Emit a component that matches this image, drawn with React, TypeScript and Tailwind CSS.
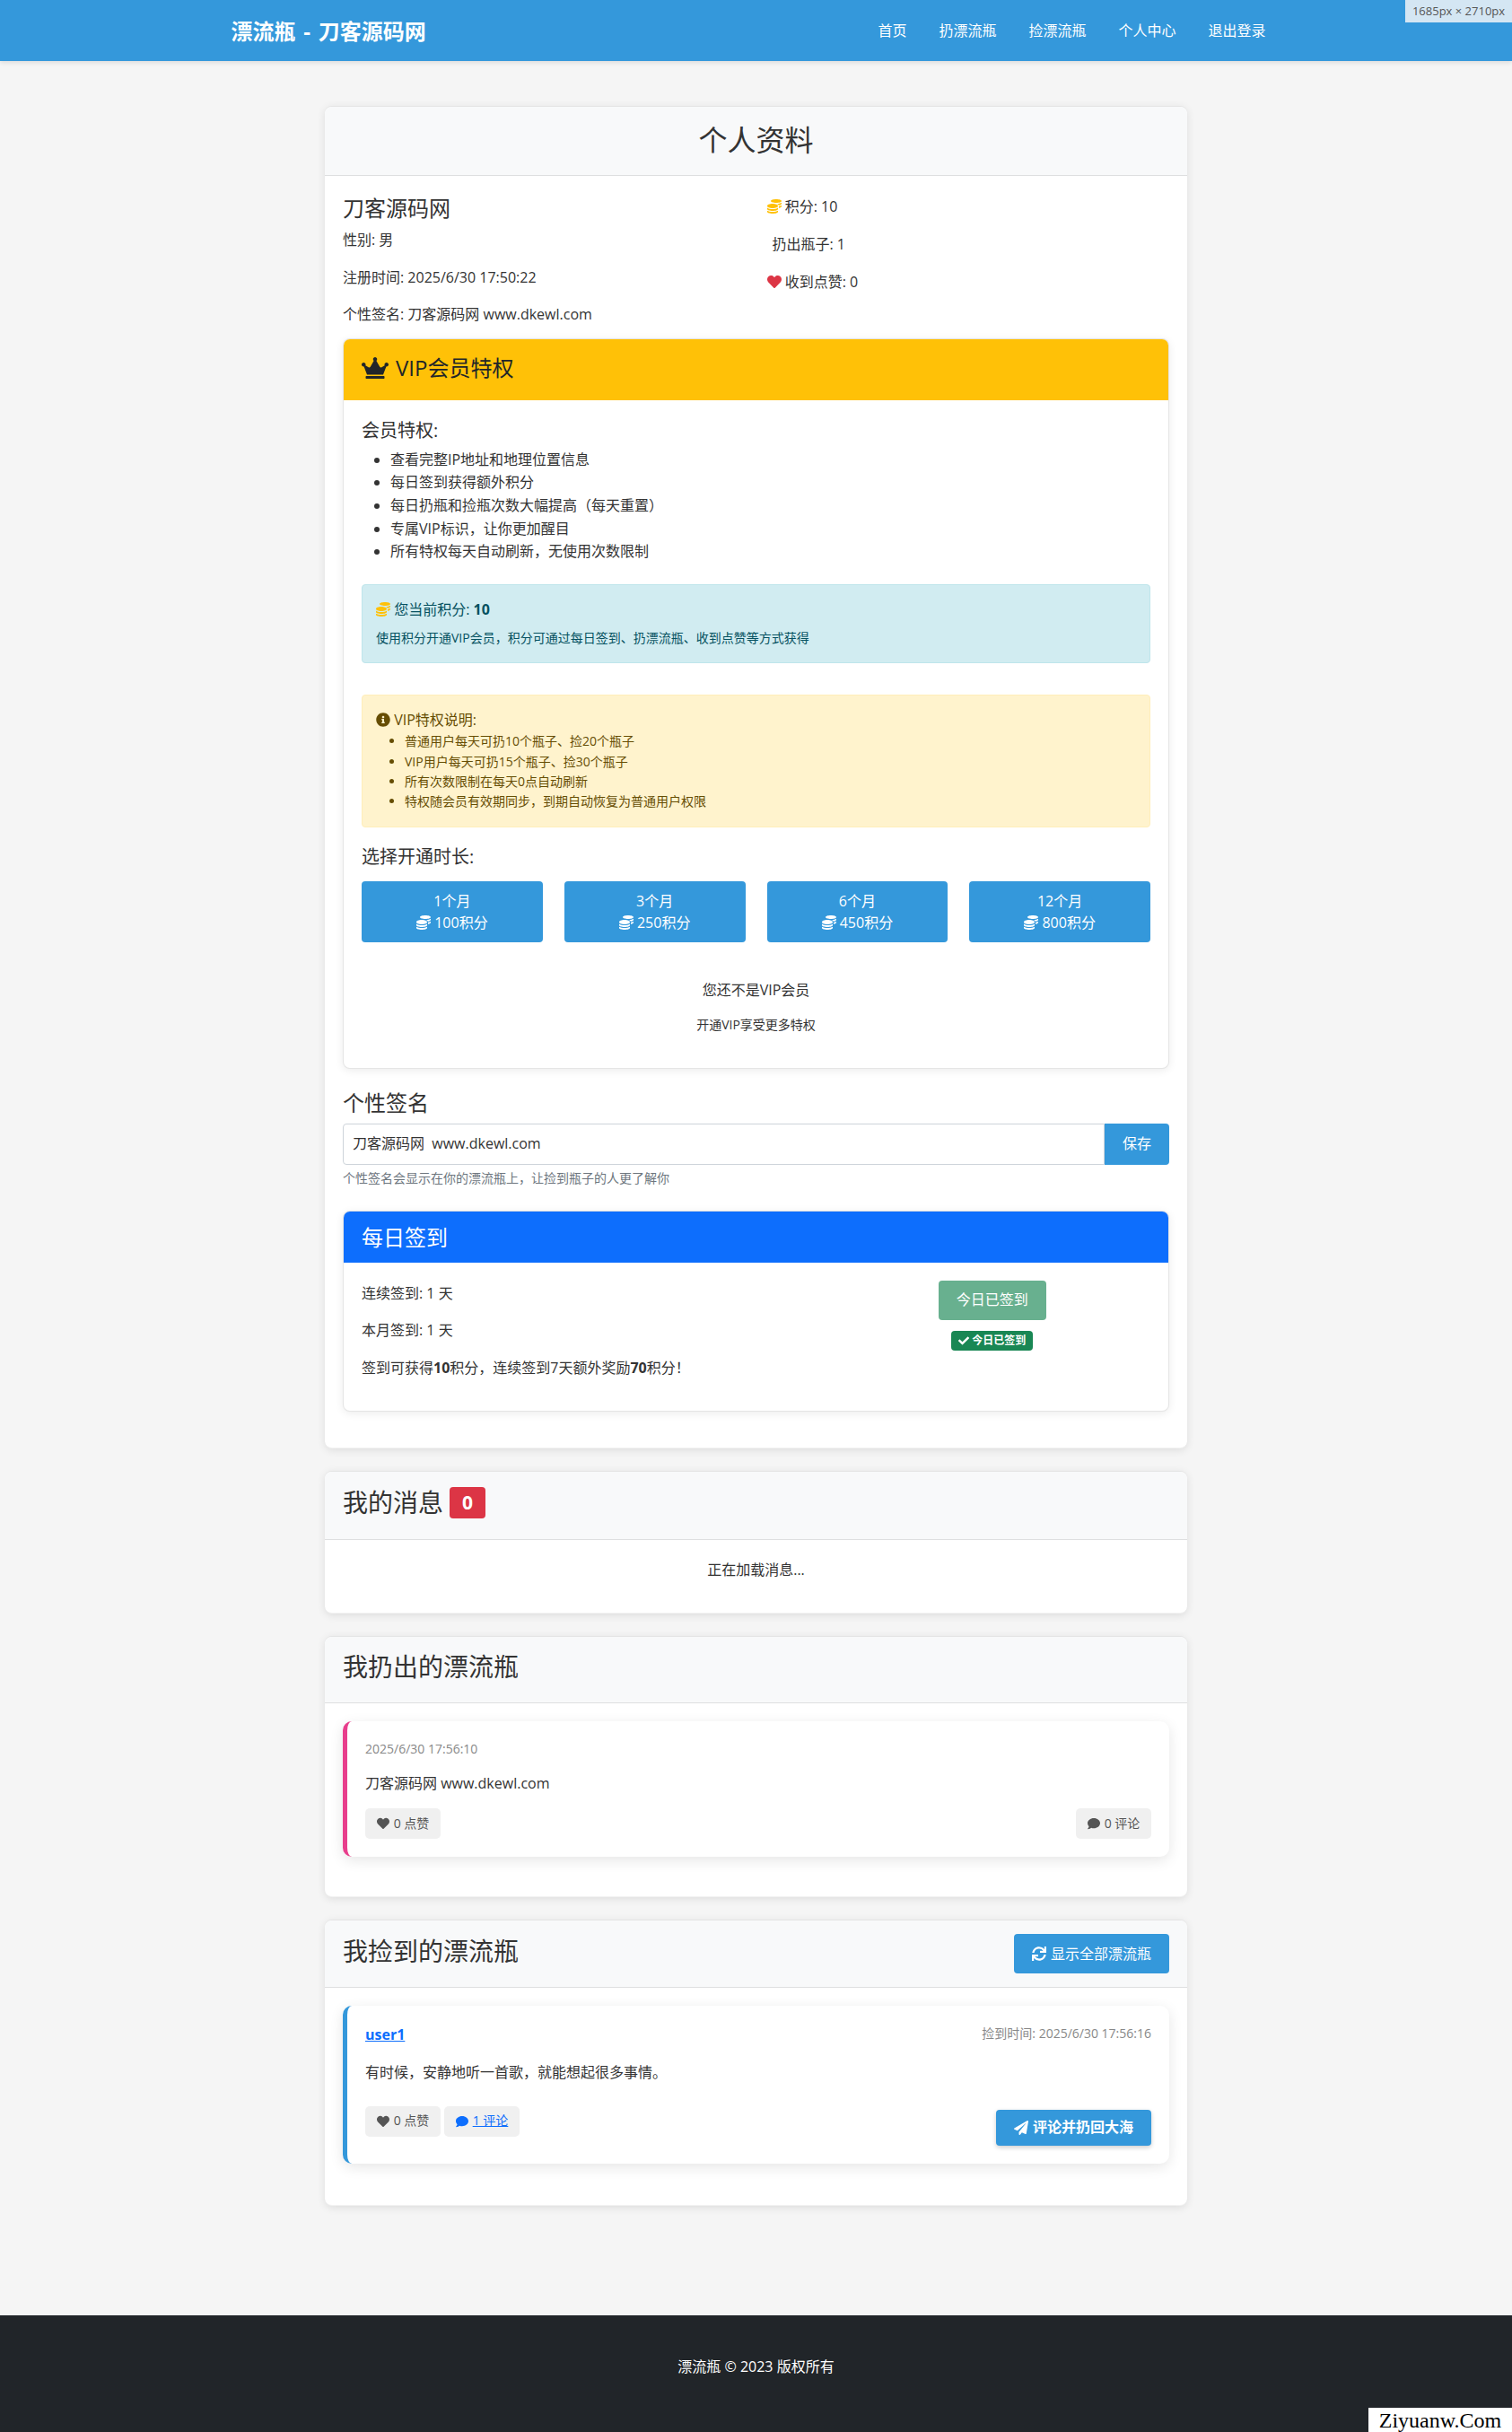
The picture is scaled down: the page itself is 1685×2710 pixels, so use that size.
import { FaCheck, FaCoins, FaComment, FaCrown, FaHeart, FaInfoCircle, FaPaperPlane, FaSync } from 'react-icons/fa';

const navLinks = ['首页', '扔漂流瓶', '捡漂流瓶', '个人中心', '退出登录'];
const perks = [
  '查看完整IP地址和地理位置信息',
  '每日签到获得额外积分',
  '每日扔瓶和捡瓶次数大幅提高（每天重置）',
  '专属VIP标识，让你更加醒目',
  '所有特权每天自动刷新，无使用次数限制',
];
const vipNotes = [
  '普通用户每天可扔10个瓶子、捡20个瓶子',
  'VIP用户每天可扔15个瓶子、捡30个瓶子',
  '所有次数限制在每天0点自动刷新',
  '特权随会员有效期同步，到期自动恢复为普通用户权限',
];
const plans = [
  { label: '1个月', cost: 100 },
  { label: '3个月', cost: 250 },
  { label: '6个月', cost: 450 },
  { label: '12个月', cost: 800 },
];

const icon = 'inline align-[-0.125em]';
const cardShell =
  'mb-[25px] rounded-lg border-y border-b-black/5 border-t-black/10 bg-white shadow-[0_2px_10px_rgba(0,0,0,0.1)] overflow-hidden';
const cardHead = 'border-b border-black/10 bg-[#f8f9fa]';
const subCard =
  'rounded-lg border border-black/10 bg-white shadow-[0_2px_10px_rgba(0,0,0,0.08)] overflow-hidden';
const pill = 'flex h-[34px] w-[84px] items-center justify-center gap-[5px] rounded-[5px] bg-[#f0f0f0] text-sm leading-[1.6]';

export default function App() {
  return (
    <div className="relative flex min-h-[2710px] flex-col bg-[#f5f5f5] font-['Open_Sans','Noto_Sans_CJK_SC',sans-serif] text-base leading-[1.6] text-[#333]">
      {/* Navbar */}
      <nav className="mb-[50px] h-[68px] bg-[#3498db] pt-[2px] text-white shadow-[0_2px_5px_rgba(0,0,0,0.1)]">
        <div className="mx-auto flex h-full w-[1170px] items-center justify-between">
          <a className="text-2xl font-bold [word-spacing:2.5px]">漂流瓶 - 刀客源码网</a>
          <ul className="flex gap-[36px] pr-[17px]">
            {navLinks.map((link) => (
              <li key={link}>{link}</li>
            ))}
          </ul>
        </div>
      </nav>

      <main className="mx-auto w-[961px]">
        {/* Profile */}
        <section className={cardShell}>
          <div className={`${cardHead} px-5 pt-[18px] pb-5 text-center`}>
            <h2 className="text-[32px] leading-[1.2]">个人资料</h2>
          </div>
          <div className="px-5 pt-[22px]">
            <div className="grid grid-cols-2 gap-x-6">
              <div>
                <h3 className="mb-2 text-2xl leading-[1.2]">刀客源码网</h3>
                <p className="mb-4">性别: 男</p>
                <p className="mb-4">注册时间: 2025/6/30 17:50:22</p>
                <p className="mb-[13px]">个性签名: 刀客源码网 www.dkewl.com</p>
              </div>
              <div>
                <p className="mb-4">
                  <FaCoins className={`${icon} text-[#ffc107]`} /> 积分: 10
                </p>
                <p className="mb-4 ml-[6px]">扔出瓶子: 1</p>
                <p className="mb-4">
                  <FaHeart className={`${icon} text-[#dc3545]`} /> 收到点赞: 0
                </p>
              </div>
            </div>

            {/* VIP */}
            <div className={`${subCard} mb-6`}>
              <div className="bg-[#ffc107] px-5 pt-[18px] pb-[21px] text-[#212529]">
                <h4 className="flex items-center gap-2 text-2xl leading-[1.2]">
                  <FaCrown className="h-6 w-[30px]" /> VIP会员特权
                </h4>
              </div>
              <div className="px-5 pt-[22px] pb-5">
                <h5 className="mb-2 text-xl leading-[1.2]">会员特权:</h5>
                <ul className="mb-[23px] list-disc pl-8">
                  {perks.map((perk) => (
                    <li key={perk}>{perk}</li>
                  ))}
                </ul>

                <div className="mb-[35px] rounded border border-[#bee5eb] bg-[#d1ecf1] p-[15px] text-[#055160]">
                  <p className="mb-2">
                    <FaCoins className={`${icon} text-[#ffc107]`} /> 您当前积分: <strong>10</strong>
                  </p>
                  <p className="text-sm leading-[1.6]">使用积分开通VIP会员，积分可通过每日签到、扔漂流瓶、收到点赞等方式获得</p>
                </div>

                <div className="mb-[21px] rounded border border-[#ffeeba] bg-[#fff3cd] px-[15px] pt-[15px] pb-4 text-[#664d03]">
                  <p>
                    <FaInfoCircle className={icon} /> VIP特权说明:
                  </p>
                  <ul className="list-disc pl-8 text-sm leading-[1.6]">
                    {vipNotes.map((note) => (
                      <li key={note}>{note}</li>
                    ))}
                  </ul>
                </div>

                <h5 className="mb-[15px] text-xl leading-[1.2]">选择开通时长:</h5>
                <div className="mb-[41px] grid grid-cols-4 gap-6">
                  {plans.map((plan) => (
                    <button key={plan.label} className="rounded bg-[#3498db] px-5 py-[10px] leading-6 text-white">
                      {plan.label}
                      <br />
                      <FaCoins className={icon} /> {plan.cost}积分
                    </button>
                  ))}
                </div>

                <div className="text-center">
                  <p className="mb-[15px]">您还不是VIP会员</p>
                  <p className="mb-4 text-sm leading-[1.6]">开通VIP享受更多特权</p>
                </div>
              </div>
            </div>

            {/* Signature */}
            <div className="mb-[25px]">
              <h4 className="mb-2 text-2xl leading-[1.2]">个性签名</h4>
              <div className="flex h-[46px]">
                <input
                  readOnly
                  value="刀客源码网  www.dkewl.com"
                  className="min-w-0 flex-1 rounded-l border border-[#ced4da] bg-white px-[10px] outline-none"
                />
                <button className="w-[72px] rounded-r bg-[#3498db] text-white">保存</button>
              </div>
              <p className="mt-1 text-sm leading-[1.6] text-[#6c757d]">个性签名会显示在你的漂流瓶上，让捡到瓶子的人更了解你</p>
            </div>

            {/* Daily check-in */}
            <div className={`${subCard} mb-10`}>
              <div className="bg-[#0d6efd] px-5 pt-[15px] pb-[13px] text-white">
                <h4 className="text-2xl leading-[1.2]">每日签到</h4>
              </div>
              <div className="grid grid-cols-12 gap-x-6 p-5">
                <div className="col-span-7 pt-[2px]">
                  <p className="mb-4">连续签到: 1 天</p>
                  <p className="mb-4">本月签到: 1 天</p>
                  <p className="mb-[14px]">
                    签到可获得<strong>10</strong>积分，连续签到7天额外奖励<strong>70</strong>积分！
                  </p>
                </div>
                <div className="col-span-5 flex flex-col items-center">
                  <button className="h-11 w-[120px] rounded bg-[#198754] text-white opacity-65">今日已签到</button>
                  <span className="mt-3 flex h-[22px] items-center gap-[3px] rounded bg-[#198754] px-2 text-xs font-bold text-white">
                    <FaCheck /> 今日已签到
                  </span>
                </div>
              </div>
            </div>
          </div>
        </section>

        {/* Messages */}
        <section className={cardShell}>
          <div className={`${cardHead} flex items-center gap-[7px] px-5 pt-[17px] pb-[23px]`}>
            <h3 className="text-[28px] leading-[1.2]">我的消息</h3>
            <span className="rounded bg-[#dc3545] px-[14px] py-[7.35px] text-[21px] leading-[21px] font-bold text-white">0</span>
          </div>
          <div className="px-5 pt-[21px] pb-[19px] text-center">
            <p className="mb-[15px]">正在加载消息...</p>
          </div>
        </section>

        {/* Thrown bottles */}
        <section className={cardShell}>
          <div className={`${cardHead} px-5 pt-[17px] pb-[22px]`}>
            <h3 className="text-[28px] leading-[1.2]">我扔出的漂流瓶</h3>
          </div>
          <div className="p-5">
            <div className="mb-6 rounded-[10px] border-l-[5px] border-[#e83e8c] bg-white p-5 shadow-[0_4px_15px_rgba(0,0,0,0.1)]">
              <p className="mb-[15px] text-sm leading-[1.6] text-[#888]">2025/6/30 17:56:10</p>
              <p className="mb-[15px]">刀客源码网 www.dkewl.com</p>
              <div className="flex justify-between">
                <span className={`${pill} text-[#555]`}>
                  <FaHeart /> 0 点赞
                </span>
                <span className={`${pill} text-[#555]`}>
                  <FaComment /> 0 评论
                </span>
              </div>
            </div>
          </div>
        </section>

        {/* Picked bottles */}
        <section className={`${cardShell} mb-[122px]`}>
          <div className={`${cardHead} flex items-center justify-between px-5 py-[15px]`}>
            <h3 className="pb-[6px] text-[28px] leading-[1.2]">我捡到的漂流瓶</h3>
            <button className="flex h-11 items-center gap-[5px] rounded bg-[#3498db] px-5 text-white">
              <FaSync /> 显示全部漂流瓶
            </button>
          </div>
          <div className="p-5">
            <div className="mb-[26px] rounded-[10px] border-l-[5px] border-[#3498db] bg-white p-5 shadow-[0_4px_15px_rgba(0,0,0,0.1)]">
              <div className="mb-4 flex items-start justify-between">
                <a className="font-bold text-[#0d6efd] underline">user1</a>
                <span className="text-sm leading-[1.6] text-[#888]">捡到时间: 2025/6/30 17:56:16</span>
              </div>
              <p className="mb-6">有时候，安静地听一首歌，就能想起很多事情。</p>
              <div className="flex items-end justify-between">
                <div className="mb-[10px] flex gap-1">
                  <span className={`${pill} text-[#555]`}>
                    <FaHeart /> 0 点赞
                  </span>
                  <a className={`${pill} text-[#0d6efd]`}>
                    <FaComment /> <span className="underline">1 评论</span>
                  </a>
                </div>
                <button className="flex h-10 items-center gap-[5px] rounded bg-[#3498db] px-5 font-semibold text-white shadow-[0_2px_5px_rgba(0,0,0,0.2)]">
                  <FaPaperPlane /> 评论并扔回大海
                </button>
              </div>
            </div>
          </div>
        </section>
      </main>

      <footer className="grow bg-[#212529] pt-[45px] text-center text-white">
        <p>漂流瓶 © 2023 版权所有</p>
      </footer>

      {/* Overlays baked into the capture */}
      <div className="absolute top-0 right-0 flex h-[25px] w-[119px] items-center justify-center bg-[#d4e6f3] text-[13px] text-[#555]">
        1685px × 2710px
      </div>
      <div className="absolute right-0 bottom-0 flex h-[27px] w-[160px] items-center justify-center bg-white font-['Liberation_Serif',serif] text-2xl text-black">
        Ziyuanw.Com
      </div>
    </div>
  );
}
